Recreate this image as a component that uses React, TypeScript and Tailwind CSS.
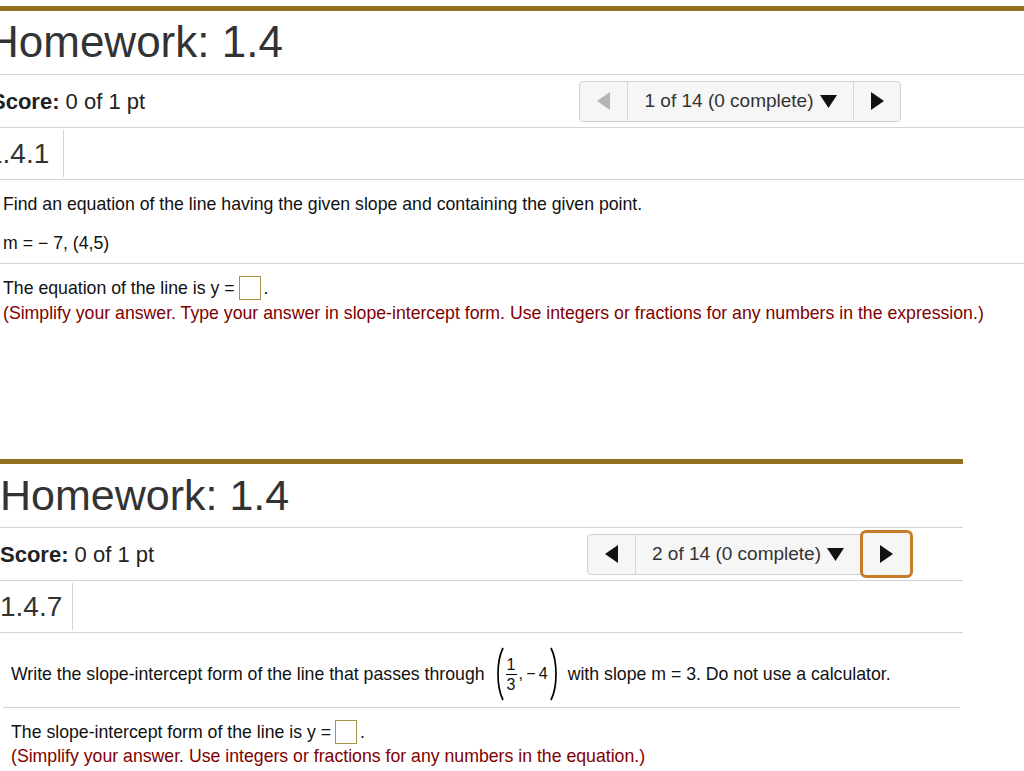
import React from "react";

const font = { fontFamily: '"Liberation Sans", Arial, sans-serif' };

function Tri({ dir, color }: { dir: "left" | "right" | "down"; color: string }) {
  if (dir === "down")
    return (
      <svg width="17" height="13" viewBox="0 0 17 13" className="ml-[6px]">
        <path d="M0 0 L17 0 L8.5 13 Z" fill={color} />
      </svg>
    );
  return (
    <svg width="13" height="18" viewBox="0 0 13 18">
      {dir === "left" ? (
        <path d="M13 0 L13 18 L0 9 Z" fill={color} />
      ) : (
        <path d="M0 0 L0 18 L13 9 Z" fill={color} />
      )}
    </svg>
  );
}

function Nav({ n, first }: { n: number; first: boolean }) {
  return (
    <div className="w-fit flex items-center h-[41px] border border-[#cfcfcf] rounded-[4px] bg-[#f6f6f6]">
      <div className="w-[48px] h-full flex items-center justify-center border-r border-[#d6d6d6]">
        <Tri dir="left" color={first ? "#b3b3b3" : "#111"} />
      </div>
      <div
        className={`h-full flex items-center justify-center text-[19px] text-[#333] ${
          first ? "w-[226px] border-r border-[#d6d6d6]" : "w-[224px]"
        }`}
      >
        {n} of 14 (0 complete)
        <Tri dir="down" color="#111" />
      </div>
      {first ? (
        <div className="w-[46px] h-full flex items-center justify-center">
          <Tri dir="right" color="#111" />
        </div>
      ) : (
        <div className="w-[53px] h-[48px] -mr-[1px] flex items-center justify-center border-[3px] border-[#c77d27] rounded-[6px] bg-[#f6f6f6]">
          <Tri dir="right" color="#111" />
        </div>
      )}
    </div>
  );
}

function Header({ n, num }: { n: number; num: string }) {
  const first = n === 1;
  return (
    <>
      <div className="h-[64px] border-b border-[#d3d3d3] pt-[10px]">
        <h1
          className={`leading-none text-[#333] whitespace-nowrap ${
            first ? "text-[44px] ml-[-5px] mt-[-1px]" : "text-[43px]"
          }`}
        >
          Homework: 1.4
        </h1>
      </div>
      <div className="h-[53px] border-b border-[#d3d3d3] grid grid-cols-[587px_auto] items-center">
        <div className={`text-[22px] text-[#222] whitespace-nowrap ${first ? "ml-[-1px]" : ""}`}>
          <span className="font-bold">Score:</span> 0 of 1 pt
        </div>
        <Nav n={n} first={first} />
      </div>
      <div className="h-[52px] border-b border-[#d3d3d3] flex">
        <div
          className={`my-[2px] border-r border-[#d3d3d3] flex items-center text-[28px] text-[#333] ${
            first ? "w-[72px]" : "w-[73px]"
          }`}
        >
          <span className={first ? "ml-[-5px]" : ""}>{num}</span>
        </div>
      </div>
    </>
  );
}

function AnswerBox() {
  return <span className="inline-block w-[22px] h-[24px] border-[1.5px] border-[#a89448] bg-white ml-[4px] mr-[3px]" />;
}

function Paren({ right }: { right?: boolean }) {
  return (
    <svg width="7" height="54" viewBox="0 0 7 54">
      {right ? (
        <path d="M1 1 Q6 11 6 27 Q6 43 1 53" stroke="#000" strokeWidth="1.7" fill="none" />
      ) : (
        <path d="M6 1 Q1 11 1 27 Q1 43 6 53" stroke="#000" strokeWidth="1.7" fill="none" />
      )}
    </svg>
  );
}

export default function App() {
  return (
    <div style={font} className="w-[1024px] h-[771px] overflow-hidden bg-white pt-[6px] text-[#111]">
      {/* first problem, page scrolled a little to the right */}
      <div className="ml-[-8px] w-[1040px] h-[453px] border-t-[5px] border-[#93721f]">
        <Header n={1} num="1.4.1" />
        <div className="px-[3px] pt-[14px] text-[17.7px]">
          <p className="px-[8px] leading-[20px]">
            Find an equation of the line having the given slope and containing the given point.
          </p>
          <p className="px-[8px] leading-[20px] mt-[19px]">m = − 7, (4,5)</p>
          <div className="mt-[10px] border-b border-[#d3d3d3]" />
          <div className="px-[8px] mt-[12px] h-[24px] flex items-center">
            The equation of the line is y =<AnswerBox />.
          </div>
          <p className="px-[8px] leading-[20px] mt-[3px] text-[#800000] whitespace-nowrap">
            (Simplify your answer. Type your answer in slope-intercept form. Use integers or fractions for any numbers in
            the expression.)
          </p>
        </div>
      </div>

      {/* second problem */}
      <div className="w-[963px] border-t-[5px] border-[#93721f]">
        <Header n={2} num="1.4.7" />
        <div className="px-[3px] text-[17.7px]">
          <div className="px-[8px] mt-[15px] h-[52px] flex items-center">
            <span>Write the slope-intercept form of the line that passes through</span>
            <span className="flex items-center ml-[12px] mr-[11px]">
              <Paren />
              <span className="flex flex-col items-center mx-[2px] leading-[17px] text-[16px]">
                <span>1</span>
                <span className="w-[11px] border-t border-black my-[1px]" />
                <span>3</span>
              </span>
              <span className="text-[16px] mr-[2px]">,{"\u2009"}−{"\u2009"}4</span>
              <Paren right />
            </span>
            <span>with slope m = 3. Do not use a calculator.</span>
          </div>
          <div className="mt-[7px] border-b border-[#d3d3d3]" />
          <div className="px-[8px] mt-[12px] h-[24px] flex items-center">
            The slope-intercept form of the line is y =<AnswerBox />.
          </div>
          <p className="px-[8px] leading-[20px] mt-[2px] text-[#800000]">
            (Simplify your answer. Use integers or fractions for any numbers in the equation.)
          </p>
        </div>
      </div>
    </div>
  );
}
